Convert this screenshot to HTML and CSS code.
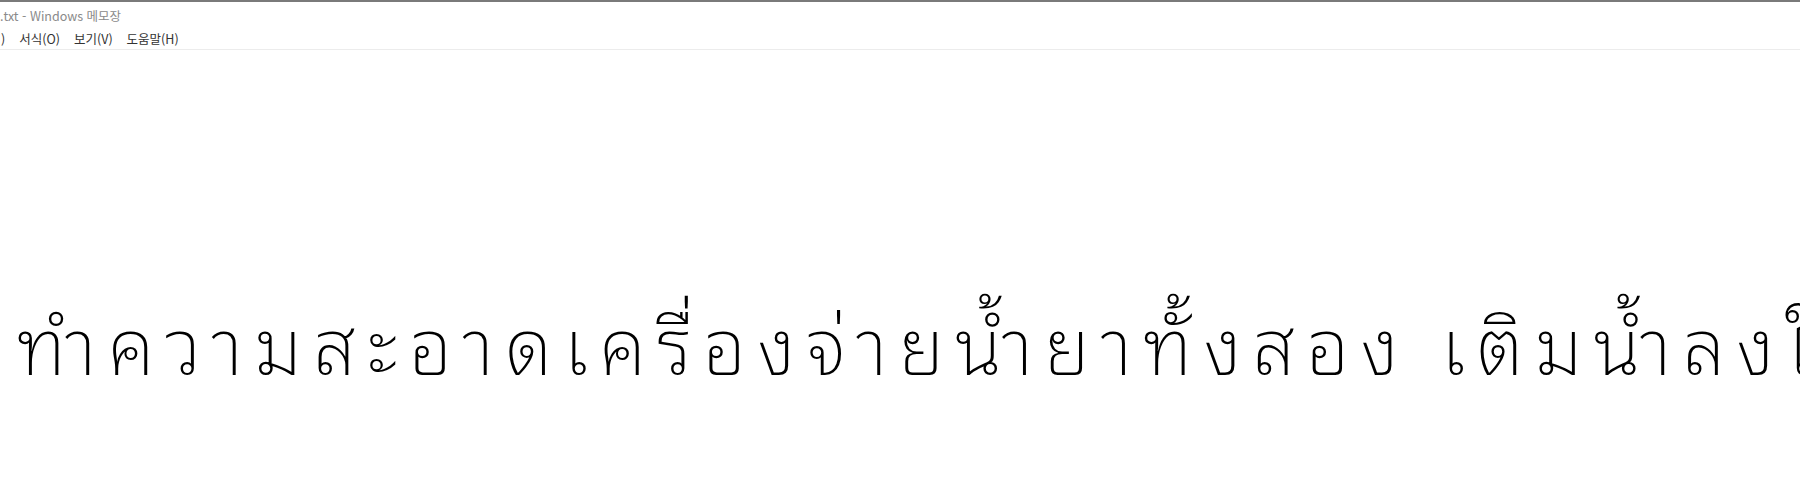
FILE: index.html
```html
<!DOCTYPE html>
<html lang="ko">
<head>
<meta charset="utf-8">
<link rel="stylesheet" href="styles.css">
</head>
<body>
<div class="window">
  <div class="titlebar"><span class="title">.txt - Windows 메모장</span></div>
  <div class="menubar">
    <span class="menu-item">)</span>
    <span class="menu-item">서식(O)</span>
    <span class="menu-item">보기(V)</span>
    <span class="menu-item">도움말(H)</span>
  </div>
  <div class="editor" lang="th">
    <div class="line">ทำความสะอาดเครื่องจ่ายน้ำยาทั้งสอง เติมน้ำลงในถังให้เต็ม</div>
    <div class="line">ถอดฝาออกก่อนเทผงลงตามขนาด</div>
  </div>
</div>
</body>
</html>
```

FILE: styles.css
```css
html, body {
  margin: 0;
  padding: 0;
  background: #ffffff;
}
body {
  width: 1800px;
  height: 482px;
  overflow: hidden;
}
.window {
  border-top: 2px solid #7a7a7a;
  height: 480px;
  display: flex;
  flex-direction: column;
}
.titlebar {
  height: 26px;
  display: flex;
  align-items: center;
  font-family: "Noto Sans CJK KR", "Noto Sans", sans-serif;
  font-size: 12.5px;
  color: #8a8a8a;
}
.menubar {
  height: 21px;
  display: flex;
  align-items: center;
  gap: 14px;
  font-family: "Noto Sans CJK KR", "Noto Sans", sans-serif;
  font-size: 12.5px;
  color: #333333;
  border-bottom: 1px solid #ececec;
}
.menu-item:first-child {
  margin-left: 1px;
}
.editor {
  flex: 1;
  overflow: hidden;
  padding-top: 195px;
  padding-left: 17px;
  font-family: "Noto Sans Thai Looped", "Noto Sans Thai", sans-serif;
  font-size: 78px;
  font-weight: 200;
  letter-spacing: 11px;
  color: #000000;
  white-space: nowrap;
}
.line {
  line-height: 190px;
  height: 190px;
}
```
